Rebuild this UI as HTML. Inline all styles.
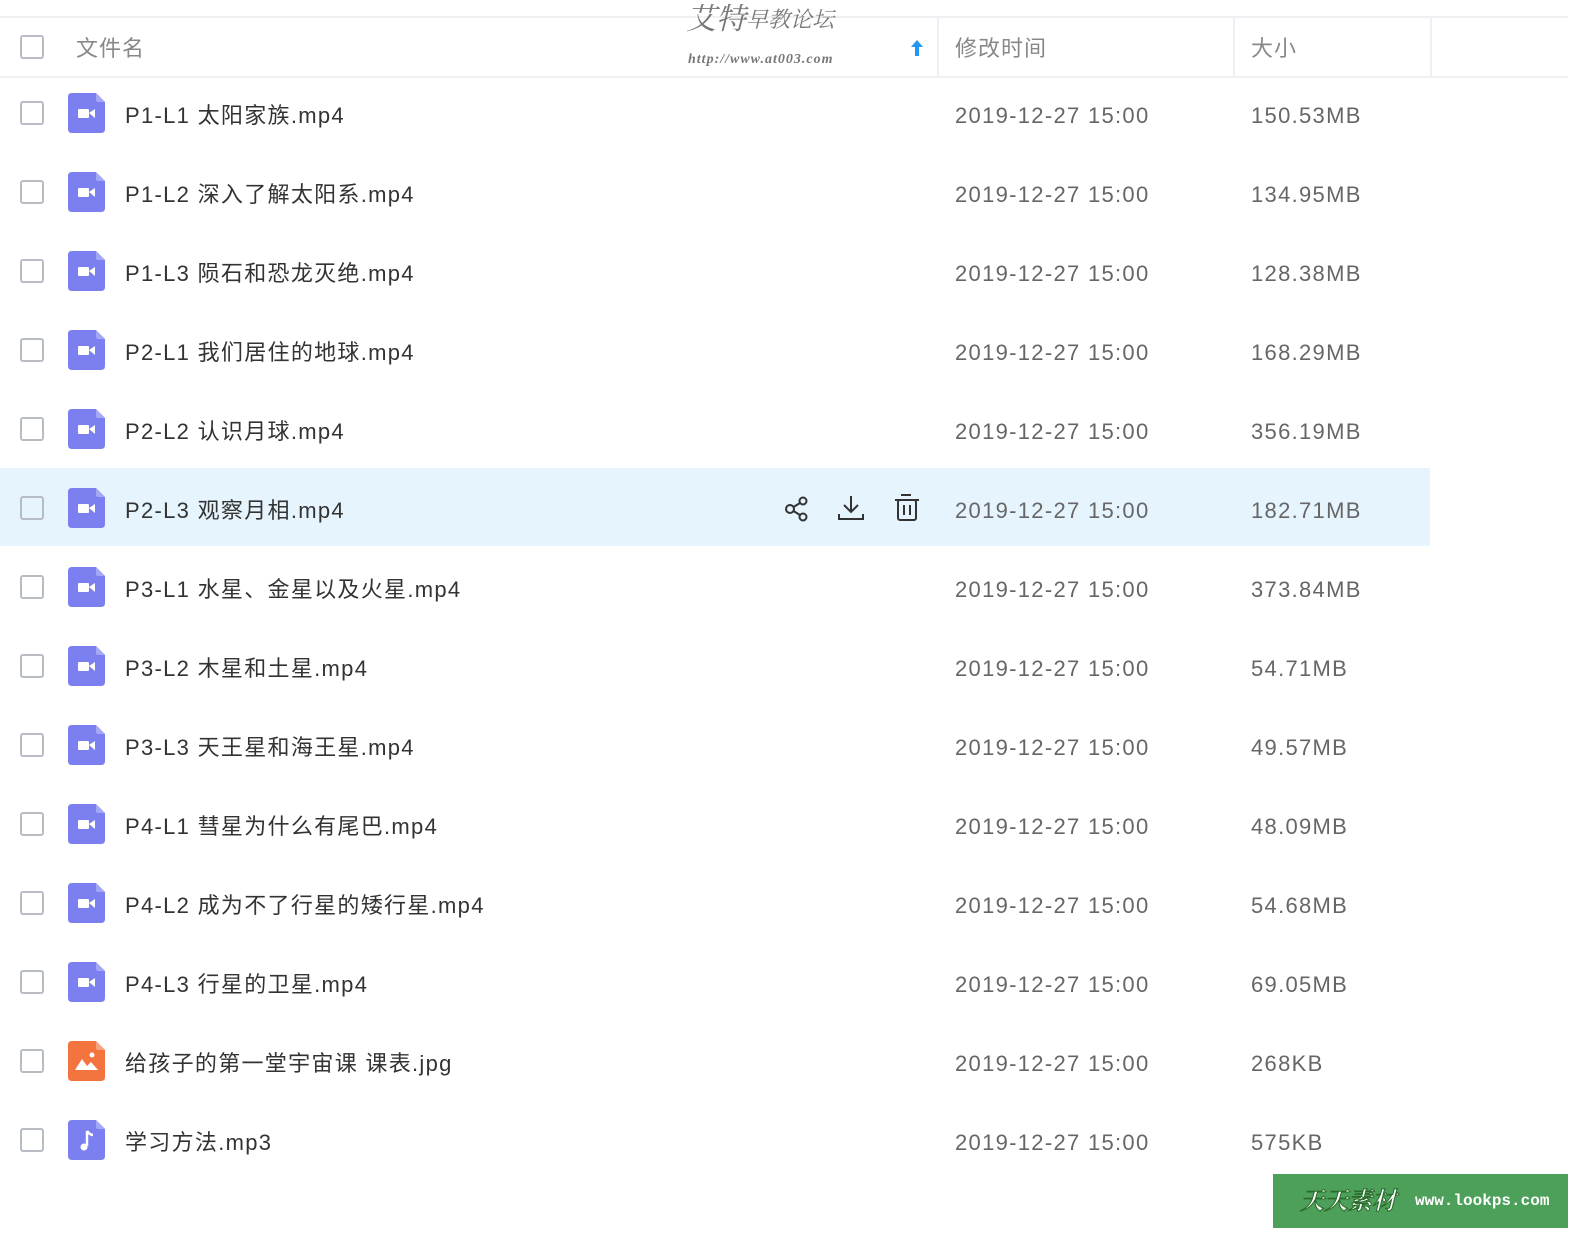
<!DOCTYPE html>
<html><head><meta charset="utf-8"><style>
html,body{margin:0;padding:0}
body{width:1591px;height:1246px;background:#fff;font-family:"Liberation Sans","Noto Sans CJK SC",sans-serif;position:relative;overflow:hidden}
.topline{position:absolute;left:0;top:16px;width:1568px;height:2px;background:#eef0f3}
.hdr{position:absolute;left:0;top:18px;width:1568px;height:58px;border-bottom:2px solid #eef0f3}
.cb{position:absolute;left:20px;width:24px;height:24px;border:2px solid #b8bcc4;border-radius:3px;box-sizing:border-box}
.sep{position:absolute;top:18px;width:2px;height:58px;background:#eef0f3}
.ht{position:absolute;font-size:22px;line-height:28px;color:#888;top:35px;letter-spacing:1px}
.row{position:absolute;left:0;width:1430px;height:78px}
.row .cb{top:28px}
.ic{position:absolute;left:68px;top:20px}
.nm,.dt,.sz{position:absolute;top:29px;font-size:22px;line-height:28px;letter-spacing:1.3px}
.nm{left:125px;color:#333}
.dt{left:955px;color:#666}
.sz{left:1251px;color:#666}
.hl{background:#e6f4fd}
</style></head><body>
<div class="topline"></div>
<div class="hdr"></div>
<div class="cb" style="top:35px"></div>
<div class="ht" style="left:76px">文件名</div>
<div style="position:absolute;left:686px;top:2px;font-family:'Liberation Serif','Noto Serif CJK SC',serif;color:#777;font-size:30px;line-height:36px;font-style:italic">艾特<span style="font-size:22px;vertical-align:top">早教论坛</span></div>
<div style="position:absolute;left:688px;top:52px;font-family:'Liberation Serif',serif;color:#777;font-size:14px;line-height:16px;font-style:italic;font-weight:bold;letter-spacing:1px">http://www.at003.com</div>
<svg style="position:absolute;left:909px;top:38px" width="16" height="20"><path d="M8 2 L2 9 H6 V18 H10 V9 H14 Z" fill="#2196f3"/></svg>
<div class="sep" style="left:937px"></div>
<div class="sep" style="left:1233px"></div>
<div class="sep" style="left:1430px"></div>
<div class="ht" style="left:955px">修改时间</div>
<div class="ht" style="left:1251px">大小</div>
<div id="rows"></div>
<script>
var d=[["P1-L1 太阳家族.mp4","150.53MB"],["P1-L2 深入了解太阳系.mp4","134.95MB"],["P1-L3 陨石和恐龙灭绝.mp4","128.38MB"],["P2-L1 我们居住的地球.mp4","168.29MB"],["P2-L2 认识月球.mp4","356.19MB"],["P2-L3 观察月相.mp4","182.71MB"],["P3-L1 水星、金星以及火星.mp4","373.84MB"],["P3-L2 木星和土星.mp4","54.71MB"],["P3-L3 天王星和海王星.mp4","49.57MB"],["P4-L1 彗星为什么有尾巴.mp4","48.09MB"],["P4-L2 成为不了行星的矮行星.mp4","54.68MB"],["P4-L3 行星的卫星.mp4","69.05MB"],["给孩子的第一堂宇宙课 课表.jpg","268KB"],["学习方法.mp3","575KB"]];
var vid='<svg class="ic" width="37" height="40"><path d="M4 0H28L37 9V36Q37 40 33 40H4Q0 40 0 36V4Q0 0 4 0Z" fill="#7b7ff0"/><path d="M28 0L37 9H30Q28 9 28 7Z" fill="#a4a7f5"/><rect x="10" y="16" width="11" height="9" rx="1" fill="#fff"/><path d="M21 20L27 16V25Z" fill="#fff"/></svg>';
var img='<svg class="ic" width="37" height="40"><path d="M4 0H28L37 9V36Q37 40 33 40H4Q0 40 0 36V4Q0 0 4 0Z" fill="#f4743f"/><path d="M28 0L37 9H30Q28 9 28 7Z" fill="#f8a27f"/><path d="M7 29L14 18L19 25L23 21L30 29Z" fill="#fff"/><circle cx="24" cy="14" r="2.5" fill="#fff"/></svg>';
var mus='<svg class="ic" width="37" height="40"><path d="M4 0H28L37 9V36Q37 40 33 40H4Q0 40 0 36V4Q0 0 4 0Z" fill="#7b7ff0"/><path d="M28 0L37 9H30Q28 9 28 7Z" fill="#a4a7f5"/><path d="M19 11V26" stroke="#fff" stroke-width="2.5"/><path d="M19 11Q22 15 25 15" stroke="#fff" stroke-width="2.5" fill="none"/><circle cx="16" cy="27" r="3.5" fill="#fff"/></svg>';
var h='';
d.forEach(function(r,i){
 var ic=i==12?img:(i==13?mus:vid);
 var y=79+79*i;
 var act=i==5?'<svg style="position:absolute;left:780px;top:23px" width="150" height="36" fill="none" stroke="#333" stroke-width="2"><circle cx="10" cy="18" r="4"/><circle cx="23" cy="10" r="3.5"/><circle cx="23" cy="26" r="3.5"/><path d="M13.5 16L20 12M13.5 20L20 24"/><path d="M71 5V21M64 14L71 21L78 14M59 23V28H83V23"/><path d="M121 4H131M115 9H139"/><rect x="118" y="9" width="18" height="20" rx="2"/><path d="M124 14V24M130 14V24"/></svg>':'';
 h+='<div class="row'+(i==5?' hl':'')+'" style="top:'+(y-6)+'px"><div class="cb"></div>'+ic+'<div class="nm">'+r[0]+'</div>'+act+'<div class="dt">2019-12-27 15:00</div><div class="sz">'+r[1]+'</div></div>';
});
document.getElementById('rows').innerHTML=h;
</script>
<div style="position:absolute;left:1273px;top:1174px;width:295px;height:54px;background:#4ca05a"></div>
<div style="position:absolute;left:1300px;top:1184px;font-family:'Noto Serif CJK SC',serif;font-size:24px;line-height:30px;font-style:italic;font-weight:bold;color:#fff;-webkit-text-stroke:1px #2a6a2a">天天素材</div>
<div style="position:absolute;left:1415px;top:1191px;font-family:'Liberation Mono',monospace;font-size:16px;line-height:20px;font-weight:bold;color:#fff">www.lookps.com</div>
</body></html>
